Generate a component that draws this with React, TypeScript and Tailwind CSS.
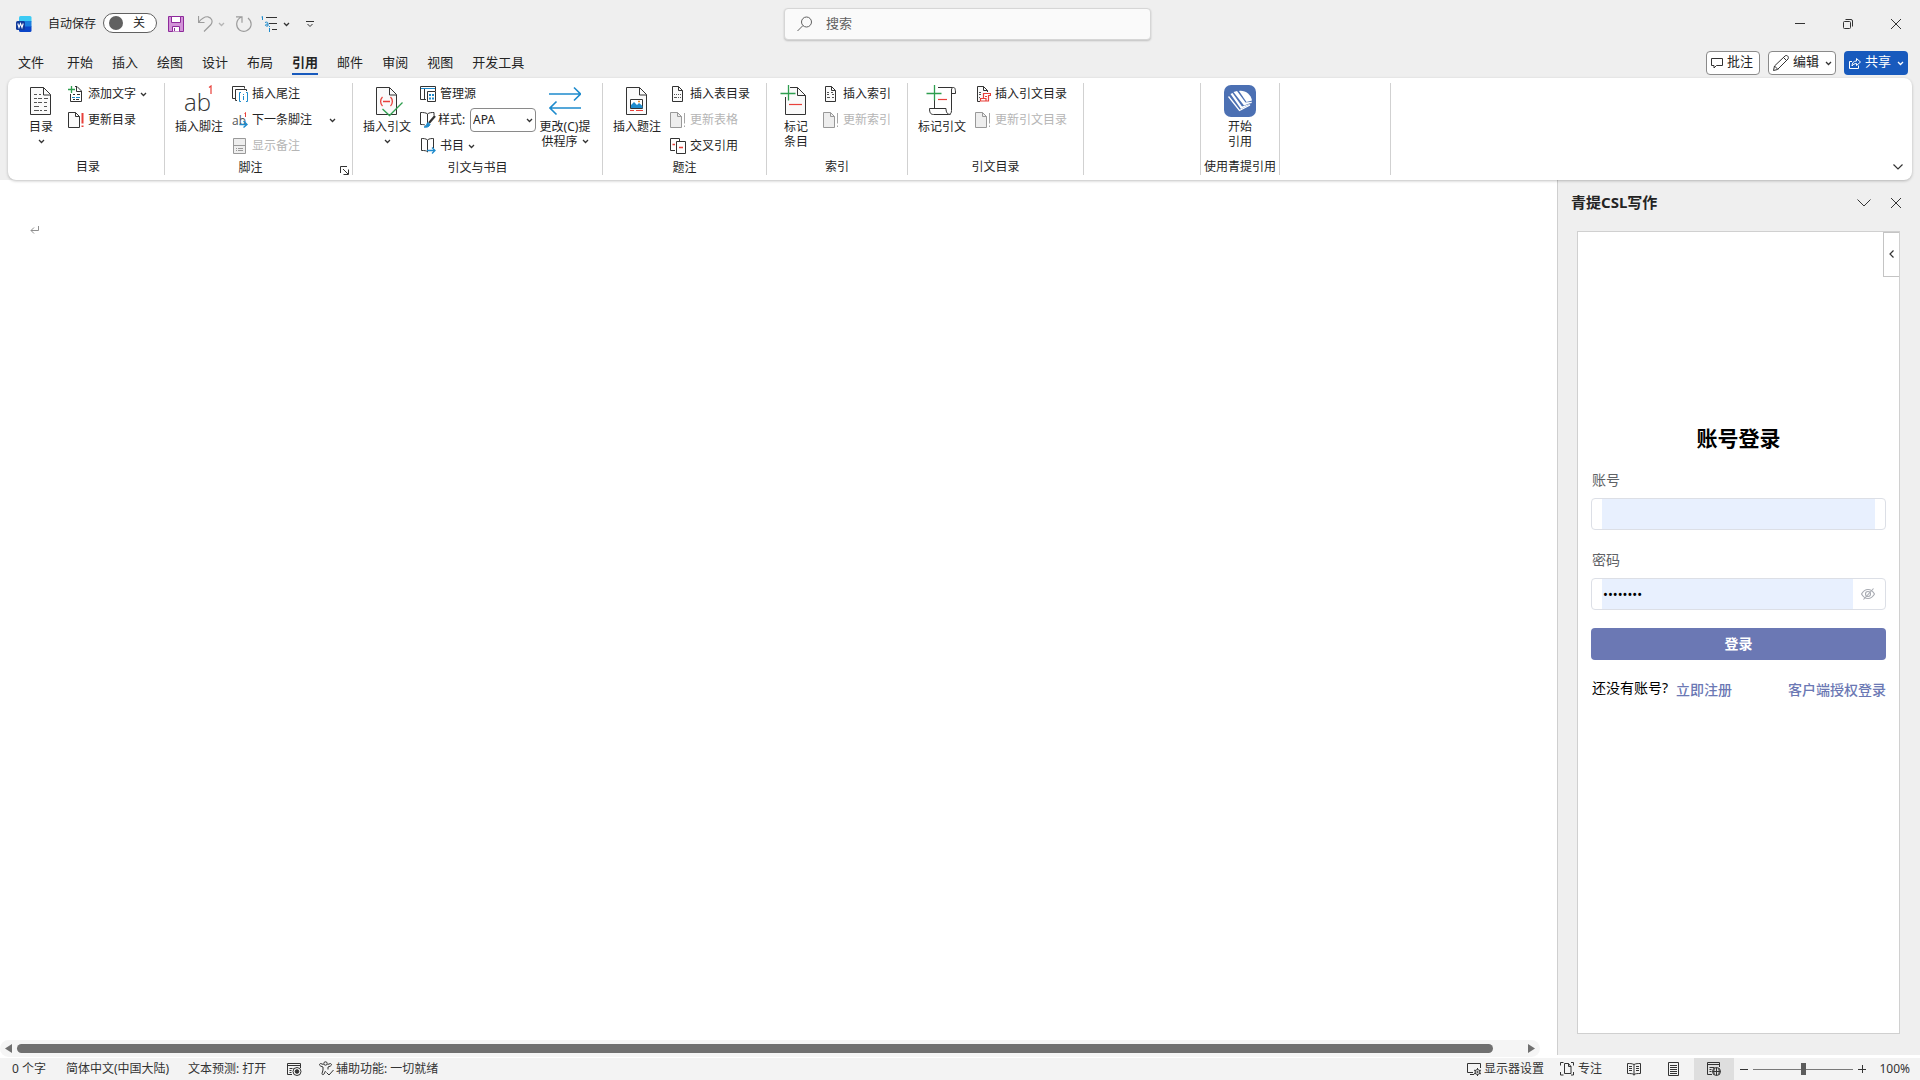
import React from "react";

type Children = { children?: React.ReactNode };

const INK = "#333333";
const BLUE = "#1e8bcd";
const RED = "#e8403a";
const GREEN = "#2f9e4f";
const DIM = "#a6a6a6";

function Glyph({ size = 16, className = "", children }: Children & { size?: number; className?: string }) {
  return (
    <svg width={size} height={size} viewBox={`0 0 ${size} ${size}`} fill="none" stroke={INK} strokeWidth="1" className={`shrink-0 ${className}`} aria-hidden="true">
      {children}
    </svg>
  );
}

function Chevron({ className = "", stroke = INK }: { className?: string; stroke?: string }) {
  return (
    <svg width="7" height="5" viewBox="0 0 7 5" fill="none" stroke={stroke} strokeWidth="1.3" className={`shrink-0 ${className}`} aria-hidden="true">
      <path d="M1 1l2.5 2.5L6 1" />
    </svg>
  );
}

/* ---------- large ribbon icons (32px) ---------- */

const TocIcon = () => (
  <Glyph size={32}>
    <path d="M5.5 2.5h13l7 7v20h-20z" fill="#fafafa" />
    <path d="M18.5 2.5v7.500h7" />
    <path d="M9 9.5h3m2 0h2M9 13.5h3m1 0h4m2 0h4M9 17.5h3m1 0h4m2 0h3M9 21.5h5m5 0h3M9 25.5h5m1 0h2m2 0h3" stroke="#555" />
  </Glyph>
);

const FootnoteIcon = () => (
  <svg width="32" height="32" viewBox="0 0 32 32" className="shrink-0" aria-hidden="true">
    <text x="1" y="26" fontFamily="Open Sans" fontSize="24" fontWeight="300" fill="#333">ab</text>
    <path d="M26 2.5l2-1.500v8" fill="none" stroke={RED} strokeWidth="1.2" />
  </svg>
);

const CitationIcon = () => (
  <Glyph size={32}>
    <path d="M5.5 2.5h13l7 7v20h-20z" fill="#fafafa" />
    <path d="M18.5 2.5v7.500h7" />
    <path d="M11.500 12c-2.500 2.500-2.500 6.500 0 9M19.500 12c2.500 2.500 2.500 6.500 0 9M12 16.500h7" stroke={RED} strokeWidth="1.3" />
    <path d="M11.500 24l7 6.500 13-13" stroke={GREEN} strokeWidth="1.3" />
  </Glyph>
);

const SwapIcon = () => (
  <Glyph size={32}>
    <g stroke={BLUE} strokeWidth="1.6">
      <path d="M0 9h31M25 2.500L31.500 9 25 15.500M32 23H1M7.500 16.500L1 23l6.500 6.500" />
    </g>
  </Glyph>
);

const CaptionIcon = () => (
  <Glyph size={32}>
    <path d="M5.5 2.5h13l7 7v20h-20z" fill="#fafafa" />
    <path d="M18.5 2.5v7.500h7" />
    <path d="M9.500 14.500h12v9h-12z" fill="#fff" />
    <path d="M10 20l3-3 3 3 2-2 3.500 3v2h-11.500z" fill={BLUE} stroke="none" />
    <path d="M17 16.500h2" stroke="#e0882c" strokeWidth="1.5" />
    <path d="M9 25.500h4m2 0h7" stroke={RED} />
  </Glyph>
);

const MarkEntryIcon = () => (
  <Glyph size={32}>
    <path d="M5.5 12v17.500h20v-19l-8-8H10" fill="#fafafa" />
    <path d="M17.500 2.500v8h8" />
    <path d="M8.500 0v15.500M.5 8.500h15" stroke={GREEN} strokeWidth="1.3" />
    <path d="M9 19.500h13" stroke={RED} strokeWidth="1.2" />
  </Glyph>
);

const MarkCitationIcon = () => (
  <Glyph size={32}>
    <path d="M8.500 13v10.500M12 2.500h14.500M24.500 29.500c-3 0-4.500-2-4.500-6H3.500c0 4 1 6 4 6h15c2 0 3-1.500 3-4V5c0-1.500.5-2.500 2-2.500S29.500 4 29.500 8.500h-4" />
    <path d="M8.500 0v15.500M.5 8.500h15" stroke={GREEN} strokeWidth="1.3" />
    <path d="M12 14.500h9" stroke={RED} strokeWidth="1.2" />
  </Glyph>
);

const BookBrandIcon = () => (
  <svg width="32" height="32" viewBox="0 0 32 32" className="shrink-0" aria-hidden="true">
    <rect width="32" height="32" rx="7" fill="#4c70b3" />
    <path d="M15 6C21 5 27 9.500 28 15.500L22.500 17z" fill="#fff" />
    <path d="M9.500 7L13 6l8.500 11.500L28 16.800v.8L20 20.500z" fill="#fff" />
    <path d="M6.500 9L8.500 8 18 21.500 28 18.200 17 24z" fill="#fff" />
    <path d="M4.500 11.500L15.500 25.500 26 20" fill="none" stroke="#fff" strokeWidth="1.3" />
  </svg>
);

/* ---------- small ribbon icons (16px) ---------- */

const AddTextIcon = () => (
  <Glyph>
    <path d="M2.500 8v7.500h11V5L9 .5H7M8.500.5v5h5" />
    <path d="M3.500 0v7M0 3.500h7" stroke={GREEN} strokeWidth="1.3" />
    <path d="M5 8.500h2m2 0h3M5 13.500h2m1 0h3" />
    <path d="M4 11.500h3m1 0h4" stroke={BLUE} />
  </Glyph>
);

function UpdateIcon({ dim = false }: { dim?: boolean }) {
  return (
    <Glyph>
      <path d="M.5.5h7l4 4v11H.5z" fill={dim ? "#eeeeee" : "#fafafa"} stroke={dim ? "#999" : INK} />
      <path d="M7.500.5v4h4" stroke={dim ? "#999" : INK} />
      <path d="M14.500 1v10.500m0 2v1.500" stroke={dim ? DIM : RED} strokeWidth={dim ? 1 : 2} />
    </Glyph>
  );
}

const EndnoteIcon = () => (
  <Glyph>
    <path d="M3 12.500H.5V.5h12v2M5 14.500H3.500v-11h11V5" />
    <path d="M9 6.500H7.500v9H9M14 6.500h1.500v9H14M11.500 10v4m0-6v1" stroke={BLUE} />
  </Glyph>
);

const NextNoteIcon = () => (
  <svg width="16" height="16" viewBox="0 0 16 16" className="shrink-0" aria-hidden="true">
    <text x="0" y="13" fontFamily="Open Sans" fontSize="12" fill="#555">ab</text>
    <path d="M12.500 1.500l1-1V5" fill="none" stroke={RED} />
    <path d="M7.500 12.500h7M11.500 9l3.500 3.500-3.500 3" fill="none" stroke={BLUE} strokeWidth="1.4" />
  </svg>
);

const ShowNotesIcon = () => (
  <Glyph>
    <path d="M1.500.5h12v15h-12z" fill="#eeeeee" stroke="#999" />
    <path d="M1.500 7.500h12M4 10.500h1m1 0h5M4 12.500h1m1 0h5" stroke="#999" />
  </Glyph>
);

const SourcesIcon = () => (
  <Glyph>
    <path d="M6 13.500H.5V.5h15V5M4.500 3v10" />
    <path d="M1 2.500h14" stroke={BLUE} />
    <path d="M7.500 5.500h8v10h-8z" fill="#fff" />
    <path d="M9 9h2m1 0h2M9 12.500h2m1 0h2" stroke={BLUE} strokeWidth="2" />
  </Glyph>
);

const StyleIcon = () => (
  <Glyph>
    <path d="M7.500 14V2C6 .5 3 .5.500.5v12c3 0 4 0 5 1M7.500 2C9 .5 12 .5 14 .5v3" />
    <path d="M15 4l-6 7" strokeWidth="2.200" />
    <path d="M4 15c3 0 2-3 4-4.500l2 2c-1 2.500-3 3-6 2.500z" fill={BLUE} stroke={BLUE} />
  </Glyph>
);

const BiblioIcon = () => (
  <Glyph>
    <path d="M7.500 14V2C6 .5 3 .5 1.500.5v12c3 0 5 0 6 1.500M7.500 2C9 .5 12 .5 13.500.5V10" />
    <path d="M7 12.500h8M12 9.500l3 3-3 3" stroke={BLUE} strokeWidth="1.3" />
  </Glyph>
);

function PageIcon({ badge = false }: { badge?: boolean }) {
  return (
    <Glyph>
      <path d={badge ? "M5 15.500H2.500V.5h6l4 4V6" : "M2.500.5h6l4 4v11h-10z"} fill="#fafafa" />
      <path d="M8.500.5v4h4" />
      <path d={badge ? "M4 6.500h2M4 8.500h2M4 11.500h1" : "M4 6.500h2m2 0h2M4 8.500h2m3 0h2M4 11.500h3m2 0h2"} stroke="#555" />
      {badge && <path d="M8.500 12.500v-5h7v2h-2v5.500h-8v-2.500h5.500v2.500M10 10.500h2" stroke={RED} strokeWidth="1.200" />}
    </Glyph>
  );
}

const TableListIcon = () => (
  <Glyph>
    <path d="M2.500.5h6l4 4v11h-10z" fill="#fafafa" />
    <path d="M8.500.5v4h4" />
    <path d="M4 8.500h1m1 0h1m1 0h1m1 0h1M4 11.500h3m1 0h1m1 0h1" stroke="#555" />
  </Glyph>
);

const CrossRefIcon = () => (
  <Glyph>
    <path d="M5 12.500H.5V.5h9V3" />
    <path d="M6.500 3.500h9v12h-9z" fill="#fff" />
    <path d="M2.500 6.500H5M9 9.500h4" stroke={RED} strokeWidth="1.3" />
  </Glyph>
);

/* ---------- ribbon building blocks ---------- */

function Group({ label, width, children, launcher = false, labelPad = "" }: Children & { label?: string; width: string; launcher?: boolean; labelPad?: string }) {
  return (
    <section aria-label={label} className={`relative flex h-[92px] shrink-0 flex-col border-r border-[#d1d1d1] ${width}`}>
      <div className="flex h-[73px] items-start">{children}</div>
      <div className={`mt-1 text-center leading-4 whitespace-nowrap ${labelPad}`}>{label}</div>
      {launcher && (
        <button aria-label="脚注和尾注设置" className="absolute right-[3px] bottom-0">
          <svg width="9" height="9" viewBox="0 0 9 9" fill="none" stroke={INK} aria-hidden="true">
            <path d="M.5 7V.5H7M3 3l5 5M8.500 3.500v5h-5" />
          </svg>
        </button>
      )}
    </section>
  );
}

function Big({ icon, lines, arrow, className = "w-12" }: { icon: React.ReactNode; lines: string[]; arrow?: "below" | "inline"; className?: string }) {
  return (
    <button className={`flex shrink-0 flex-col items-center pt-0.5 leading-[15px] whitespace-nowrap ${className}`}>
      {icon}
      <span className="mt-0.5">{lines[0]}</span>
      {lines[1] && (
        <span className="flex items-center gap-1">
          {lines[1]}
          {arrow === "inline" && <Chevron />}
        </span>
      )}
      {arrow === "below" && <Chevron className="mt-[5px]" />}
    </button>
  );
}

function Small({ icon, text, arrow = false, disabled = false, arrowGap = "ml-1" }: { icon: React.ReactNode; text: string; arrow?: boolean; disabled?: boolean; arrowGap?: string }) {
  return (
    <button disabled={disabled} className={`flex h-5 items-center whitespace-nowrap ${disabled ? "text-[#b5b5b5]" : ""}`}>
      {icon}
      <span className="ml-1">{text}</span>
      {arrow && <Chevron className={arrowGap} />}
    </button>
  );
}

function Stack({ children, className = "ml-[9px]" }: Children & { className?: string }) {
  return <div className={`flex flex-col items-start gap-1.5 pt-px ${className}`}>{children}</div>;
}

/* ---------- window chrome ---------- */

function TitleBar() {
  return (
    <header className="flex h-12 shrink-0 items-start justify-between">
      <div className="flex h-12 w-[784px] shrink-0 items-center pl-4">
        <svg width="16" height="16" viewBox="0 0 16 16" className="shrink-0" aria-hidden="true">
          <path d="M3 1.500Q3 0 4.500 0H14Q15.500 0 15.500 1.500V5.500H3z" fill="#3ccbf4" />
          <path d="M3 5h12.500v6H3z" fill="#1a7fe0" />
          <path d="M3 10.500h12.500v4Q15.500 16 14 16H4.500Q3 16 3 14.500z" fill="#0a45c8" />
          <rect y="5" width="9" height="9" rx="1.5" fill="#123b9c" />
          <path d="M1.800 7.500l1.200 4 1.500-4 1.500 4 1.200-4" fill="none" stroke="#fff" strokeWidth="1.1" />
        </svg>
        <label htmlFor="autosave" className="mb-px ml-4 text-xs">自动保存</label>
        <button id="autosave" role="switch" aria-checked="false" className="mb-0.5 ml-[7px] flex h-5 w-[54px] items-center justify-between rounded-full border border-[#616161] bg-white pr-[11px] pl-[5px] text-xs">
          <span className="size-3.5 rounded-full bg-[#616161]" />
          <span>关</span>
        </button>
        <button aria-label="保存" className="ml-[11px]">
          <Glyph>
            <path d="M.5.5h15v15H.5z" fill="#d293d8" stroke="#8e2a9b" />
            <path d="M3.500.5h9v6h-9zM4.500 15.500v-5h7v5" fill="#fff" stroke="#8e2a9b" />
            <path d="M6.500 12v3" stroke="#8e2a9b" />
          </Glyph>
        </button>
        <button aria-label="撤消" className="ml-3.5 flex items-center gap-1">
          <Glyph><g stroke="#9c9c9c" strokeWidth="1.2"><path d="M.5 0v6.500h6M.5 6.500C4 2 7 .5 10 .8c4 .7 5 5 3 7.700L6 15.500" /></g></Glyph>
          <Chevron stroke="#b5b5b5" />
        </button>
        <button aria-label="恢复" className="ml-[11px]">
          <Glyph><g stroke="#9c9c9c" strokeWidth="1.2"><path d="M0 .8h6v6M5.500 1C-.5 3.500-.5 11 3.500 14c4.500 3 10.500.5 11.500-4.500.5-3-.5-5.500-3-7.500" /></g></Glyph>
        </button>
        <button aria-label="多级列表" className="ml-[9px] flex items-center gap-1.5">
          <Glyph>
            <path d="M5 1.500h11M8 7.500h8M11 13.500h5" />
            <path d="M.5 1l1-.5V4M4 6.500c2-1 3 0 3 1v2.500H5C3.500 9 5 8 7 8M8.500 12v4m0-6v1" stroke={BLUE} />
          </Glyph>
          <Chevron />
        </button>
        <button aria-label="自定义快速访问工具栏" className="ml-4">
          <svg width="8" height="8" viewBox="0 0 8 8" fill="none" stroke={INK} aria-hidden="true"><path d="M0 1.500h8M1.500 4L4 6.500 6.500 4" /></svg>
        </button>
      </div>
      <label className="mt-2 flex h-8 w-[367px] shrink-0 items-center rounded-[4px] border border-[#d6d6d6] bg-[#fafafa] pl-3 shadow-[0_1px_2px_rgba(0,0,0,0.2)]">
        <Glyph><g stroke="#616161"><circle cx="9.500" cy="6" r="5" /><path d="M6 9.500L.5 15" /></g></Glyph>
        <input aria-label="搜索" placeholder="搜索" className="mb-px ml-[13px] w-72 bg-transparent text-[13px] outline-none placeholder:text-[#5f5f5f]" />
      </label>
      <div className="flex h-12 flex-1 items-center justify-end">
        <button aria-label="最小化" className="flex w-12 justify-center"><Glyph size={10}><path d="M0 4.500h10" /></Glyph></button>
        <button aria-label="还原" className="flex w-12 justify-center"><Glyph size={10}><rect x=".5" y="2.5" width="7" height="7" rx="1" /><path d="M2.500.5H8q1.500 0 1.500 1.500v5.500" /></Glyph></button>
        <button aria-label="关闭" className="flex w-12 justify-center"><Glyph size={10}><path d="M0 0l10 10M10 0L0 10" /></Glyph></button>
      </div>
    </header>
  );
}

const TABS = ["开始", "插入", "绘图", "设计", "布局", "引用", "邮件", "审阅", "视图", "开发工具"];

function TabRow() {
  return (
    <div className="flex h-[30px] shrink-0 items-start justify-between pr-3 pl-[18px] text-[13px]">
      <nav className="flex gap-[19px] pt-[3px]">
        <button className="mr-1 border-b-2 border-transparent leading-[22px]">文件</button>
        {TABS.map((tab) => (
          <button key={tab} className={`border-b-2 leading-[22px] ${tab === "引用" ? "border-[#185abd] font-bold" : "border-transparent"}`}>{tab}</button>
        ))}
      </nav>
      <div className="mt-[3px] flex gap-2">
        <button className="flex h-6 w-[54px] items-center rounded-[4px] border border-[#8a8a8a] bg-white pl-1">
          <Glyph size={12}><path d="M.5 1.500h11v7H5.500L3 11V8.500H.5z" /></Glyph>
          <span className="ml-1 pb-[3px]">批注</span>
        </button>
        <button className="flex h-6 w-[68px] items-center rounded-[4px] border border-[#8a8a8a] bg-white pl-1">
          <Glyph><path d="M.5 15.500l1-4.500L12 1c1-1 2.500-.5 3 .5s.5 1.500 0 2.500L4.500 14.500zM1.500 11l3.500 3.500M10.500 2.500L14 6" /></Glyph>
          <span className="ml-1 pb-[3px]">编辑</span>
          <Chevron className="ml-1.5" />
        </button>
        <button className="flex h-6 w-16 items-center rounded-[4px] bg-[#185abd] pl-[5px] text-white">
          <Glyph size={12}><path d="M3 4.500H.5v7h9V8.500M3 9c0-3 1.500-5 4.500-5V1.500L11.500 5 7.500 8.500V6.500C5.500 6.500 4 7.500 3 9z" stroke="#fff" /></Glyph>
          <span className="ml-1 pb-[3px]">共享</span>
          <Chevron stroke="#fff" className="ml-1.5" />
        </button>
      </div>
    </div>
  );
}

function Ribbon() {
  return (
    <div className="relative z-10 mx-2 flex h-[102px] shrink-0 rounded-lg bg-white pt-[5px] text-xs shadow-[0_1px_3px_rgba(0,0,0,0.25)]">
      <Group label="目录" width="w-[157px]" labelPad="pl-1">
        <div className="ml-[9px]"><Big icon={<TocIcon />} lines={["目录"]} arrow="below" /></div>
        <Stack className="ml-[3px]">
          <Small icon={<AddTextIcon />} text="添加文字" arrow />
          <Small icon={<UpdateIcon />} text="更新目录" />
        </Stack>
      </Group>
      <Group label="脚注" width="w-[188px]" launcher labelPad="pr-4">
        <div className="ml-2.5"><Big icon={<FootnoteIcon />} lines={["插入脚注"]} /></div>
        <Stack>
          <Small icon={<EndnoteIcon />} text="插入尾注" />
          <Small icon={<NextNoteIcon />} text="下一条脚注" arrow arrowGap="ml-[17px]" />
          <Small icon={<ShowNotesIcon />} text="显示备注" disabled />
        </Stack>
      </Group>
      <Group label="引文与书目" width="w-[250px]">
        <div className="ml-2.5"><Big icon={<CitationIcon />} lines={["插入引文"]} arrow="below" /></div>
        <Stack>
          <Small icon={<SourcesIcon />} text="管理源" />
          <div className="flex h-5 w-[116px] items-center">
            <StyleIcon />
            <label htmlFor="cite-style" className="ml-0.5 w-8 whitespace-nowrap">样式:</label>
            <div className="relative flex h-6 w-[66px] items-center">
              <select id="cite-style" defaultValue="APA" className="h-6 w-[66px] appearance-none rounded-[4px] border border-[#8a8a8a] bg-white pl-0.5">
                <option>APA</option>
              </select>
              <Chevron className="pointer-events-none absolute right-[3px]" />
            </div>
          </div>
          <Small icon={<BiblioIcon />} text="书目" arrow />
        </Stack>
        <div className="ml-px"><Big icon={<SwapIcon />} lines={["更改(C)提", "供程序"]} arrow="inline" className="w-14" /></div>
      </Group>
      <Group label="题注" width="w-[164px]">
        <div className="ml-2.5"><Big icon={<CaptionIcon />} lines={["插入题注"]} /></div>
        <Stack>
          <Small icon={<TableListIcon />} text="插入表目录" />
          <Small icon={<UpdateIcon dim />} text="更新表格" disabled />
          <Small icon={<CrossRefIcon />} text="交叉引用" />
        </Stack>
      </Group>
      <Group label="索引" width="w-[141px]">
        <div className="ml-[5px]"><Big icon={<MarkEntryIcon />} lines={["标记", "条目"]} /></div>
        <Stack className="ml-[3px]">
          <Small icon={<PageIcon />} text="插入索引" />
          <Small icon={<UpdateIcon dim />} text="更新索引" disabled />
        </Stack>
      </Group>
      <Group label="引文目录" width="w-[176px]">
        <div className="ml-2.5"><Big icon={<MarkCitationIcon />} lines={["标记引文"]} /></div>
        <Stack>
          <Small icon={<PageIcon badge />} text="插入引文目录" />
          <Small icon={<UpdateIcon dim />} text="更新引文目录" disabled />
        </Stack>
      </Group>
      <Group width="w-[117px]" />
      <Group label="使用青提引用" width="w-[79px]">
        <div className="mx-auto"><Big icon={<BookBrandIcon />} lines={["开始", "引用"]} /></div>
      </Group>
      <Group width="w-[111px]" />
      <button aria-label="折叠功能区" className="mt-auto mr-[9px] mb-2.5 ml-auto">
        <svg width="10" height="6" viewBox="0 0 10 6" fill="none" stroke={INK} strokeWidth="1.2" aria-hidden="true"><path d="M.5.5L5 5 9.500.5" /></svg>
      </button>
    </div>
  );
}

/* ---------- document ---------- */

function DocumentArea() {
  return (
    <main className="flex min-w-0 flex-1 flex-col bg-white">
      <div className="flex-1 pt-[46px] pl-[30px]">
        <svg width="9" height="9" viewBox="0 0 9 9" fill="none" stroke="#8f8f8f" aria-label="段落标记"><path d="M8.500 0v4.500H1M4 1.500L1 4.500l3 3" /></svg>
      </div>
      <div className="mr-[17px] mb-px flex h-[17px] items-center rounded-full bg-[#f5f5f5] pr-[5px] pl-[5px]">
        <svg width="7" height="9" viewBox="0 0 7 9" aria-hidden="true"><path d="M7 0v9L0 4.500z" fill="#707070" /></svg>
        <div className="mr-[35px] ml-[5px] h-[9px] flex-1 rounded-full bg-[#707070]" />
        <svg width="7" height="9" viewBox="0 0 7 9" aria-hidden="true"><path d="M0 0v9l7-4.500z" fill="#707070" /></svg>
      </div>
    </main>
  );
}

/* ---------- task pane ---------- */

function LoginForm() {
  return (
    <form className="px-[13px] pt-[190px] text-sm" onSubmit={(e) => e.preventDefault()}>
      <h1 className="text-center text-[21px] leading-8 font-bold text-black">账号登录</h1>
      <label htmlFor="account" className="mt-[15px] block pl-px leading-[22px] text-[#606266]">账号</label>
      <div className="mt-[7px] flex h-8 rounded-[4px] border border-[#dcdfe6] bg-white px-2.5">
        <input id="account" className="min-w-0 flex-1 bg-[#e8f0fe] px-px outline-none" />
      </div>
      <label htmlFor="password" className="mt-[19px] block pl-px leading-[22px] text-[#606266]">密码</label>
      <div className="mt-[7px] flex h-8 items-center rounded-[4px] border border-[#dcdfe6] bg-white px-2.5">
        <input id="password" type="password" defaultValue="passcode" className="h-full min-w-0 flex-1 bg-[#e8f0fe] px-px text-[13px] text-black outline-none" />
        <button type="button" aria-label="显示密码" className="ml-2">
          <svg width="14" height="14" viewBox="0 0 14 14" fill="none" stroke="#a8abb2" strokeWidth="1.1" aria-hidden="true">
            <path d="M.5 7C2.500 3.500 4.500 2.500 7 2.500S11.500 3.500 13.500 7C11.500 10.500 9.500 11.500 7 11.500S2.500 10.500.5 7z" />
            <circle cx="7" cy="7" r="2.5" />
            <path d="M2.500 12.500l10-11" />
          </svg>
        </button>
      </div>
      <button type="submit" className="mt-[18px] h-8 w-full rounded-[4px] bg-[#6b78b4] font-bold text-white">登录</button>
      <div className="mt-[17px] flex items-start justify-between leading-[22px]">
        <div className="flex pl-px">
          <span className="text-black">还没有账号?</span>
          <a href="#register" className="mt-0.5 ml-2 font-medium text-[#6b78b4]">立即注册</a>
        </div>
        <a href="#client" className="mt-0.5 font-medium text-[#6b78b4]">客户端授权登录</a>
      </div>
    </form>
  );
}

function TaskPane() {
  return (
    <aside className="mb-[3px] flex w-[363px] shrink-0 flex-col border-l border-[#cfcfcf] bg-[#efefef]">
      <div className="flex h-[46px] items-center justify-between pr-[19px] pl-[13px]">
        <h2 className="mb-0.5 text-[15px] font-bold">青提CSL写作</h2>
        <div className="flex items-center gap-5">
          <button aria-label="任务窗格选项"><svg width="14" height="8" viewBox="0 0 14 8" fill="none" stroke={INK} aria-hidden="true"><path d="M.5.5L7 7 13.500.5" /></svg></button>
          <button aria-label="关闭窗格"><Glyph size={10}><path d="M0 0l10 10M10 0L0 10" /></Glyph></button>
        </div>
      </div>
      <div className="relative mt-[5px] mr-5 mb-[21px] ml-[19px] flex-1 border border-[#d0d0d0] bg-white">
        <LoginForm />
        <button aria-label="展开侧栏" className="absolute top-0 right-0 flex h-[45px] w-4 items-center justify-center border border-r-0 border-[#c4c4c4] bg-white pb-0.5">
          <svg width="5" height="8" viewBox="0 0 5 8" fill="none" stroke={INK} strokeWidth="1.2" aria-hidden="true"><path d="M4.500.5L1 4l3.500 3.500" /></svg>
        </button>
      </div>
    </aside>
  );
}

/* ---------- status bar ---------- */

function StatusBar() {
  return (
    <footer className="flex h-[22px] shrink-0 items-center justify-between bg-[#f3f3f3] text-xs text-[#333]">
      <div className="flex items-center pl-3 whitespace-nowrap">
        <button className="w-[54px] text-left">0 个字</button>
        <button className="w-[122px] text-left">简体中文(中国大陆)</button>
        <button className="w-[99px] text-left">文本预测: 打开</button>
        <button aria-label="宏录制" className="w-8">
          <Glyph><path d="M5 13.500H.5v-11h13V7M.5 4.500h13M2.500 7.500h3m1 0h1M2.500 9.500h2M2.500 11.500h2" /><circle cx="10" cy="10.500" r="4" fill="#f3f3f3" /><circle cx="10" cy="10.500" r="1.8" fill={INK} /></Glyph>
        </button>
        <button className="flex items-center gap-px">
          <Glyph><circle cx="6.500" cy="2.500" r="1.7" /><path d="M4.500 3.500L1.500 2.500C0 3 .5 4.500 1.500 5l2.500 1v3L3 12.500c0 1.500 1.500 1.500 2 .5l1.500-3M8.500 3.500l3-1c1.500.5 1 2 0 2.500L9 6v2.500M7.500 11.500l2.500 2.500 4.500-5" /></Glyph>
          辅助功能: 一切就绪
        </button>
      </div>
      <div className="flex h-full items-center whitespace-nowrap">
        <button className="flex items-center gap-px">
          <Glyph><path d="M6 11.500H.5v-9h13V7M3 13.500h4" /><circle cx="10.500" cy="11" r="2.5" /><circle cx="10.500" cy="11" r=".7" /><path d="M10.500 7v1.500m0 5V15M7 9l1.500 1m4 2l1.500 1M7 13l1.500-1m4-2L14 9" /></Glyph>
          显示器设置
        </button>
        <button className="ml-4 flex items-center gap-0.5">
          <Glyph><path d="M.5 4.500v-3h3M.5 11v3h3M11 1.500h2.500v3M11 14h2.500v-3M4.500 2.500h4l2.500 3v7H4.500zM8.500 2.500v3H11" /></Glyph>
          专注
        </button>
        <div className="ml-3 flex h-full">
          <button aria-label="阅读视图" className="flex w-10 items-center justify-center"><Glyph size={14}><path d="M7 2.500v11M7 2.500C5 1.500 3 1.500.5 1.500v10c3 0 5 0 6.500 1 1.500-1 3.500-1 6.500-1v-10C11 1.500 9 1.500 7 2.500M2 4.500h3M2 6.500h3M2 8.500h3M9 4.500h3M9 6.500h3M9 8.500h3" /></Glyph></button>
          <button aria-label="页面视图" className="flex w-10 items-center justify-center"><Glyph size={14}><path d="M1.500.5h10v13h-10zM3 3.500h7M3 5.500h7M3 7.500h7M3 9.500h7M3 11.500h7" /></Glyph></button>
          <button aria-label="Web 版式视图" className="flex w-10 items-center justify-center bg-[#dedede]"><Glyph size={14}><path d="M5 12.500H.5V.5h12V5M.5 2.500h12M2.500 5.500h5M2.500 7.500h2M2.500 9.500h2" /><circle cx="9.500" cy="9.500" r="4" fill="#dedede" /><path d="M5.500 9.500h8M9.500 5.500v8M7.500 6.500c-1 2-1 4 0 6M11.500 6.500c1 2 1 4 0 6" /></Glyph></button>
        </div>
        <button aria-label="缩小" className="ml-1.5"><Glyph size={8}><path d="M0 4.500h8" /></Glyph></button>
        <input
          type="range"
          aria-label="显示比例"
          min="0"
          max="100"
          defaultValue="50"
          className="mx-[5px] h-3 w-[100px] appearance-none bg-[linear-gradient(#7a7a7a,#7a7a7a)] bg-[length:100%_1px] bg-center bg-no-repeat [&::-webkit-slider-thumb]:h-3 [&::-webkit-slider-thumb]:w-[5px] [&::-webkit-slider-thumb]:appearance-none [&::-webkit-slider-thumb]:bg-[#5c5c5c]"
        />
        <button aria-label="放大" className="mr-3"><Glyph size={8}><path d="M0 4.500h8M4.500 0v8" /></Glyph></button>
        <button className="w-[42px] pr-2.5 text-right">100%</button>
      </div>
    </footer>
  );
}

export default function App() {
  return (
    <div className="flex h-screen flex-col bg-[#efefef] font-['Noto_Sans','Noto_Sans_CJK_SC',sans-serif] text-[#242424]">
      <TitleBar />
      <TabRow />
      <Ribbon />
      <div className="flex min-h-0 flex-1 bg-white">
        <DocumentArea />
        <TaskPane />
      </div>
      <StatusBar />
    </div>
  );
}
